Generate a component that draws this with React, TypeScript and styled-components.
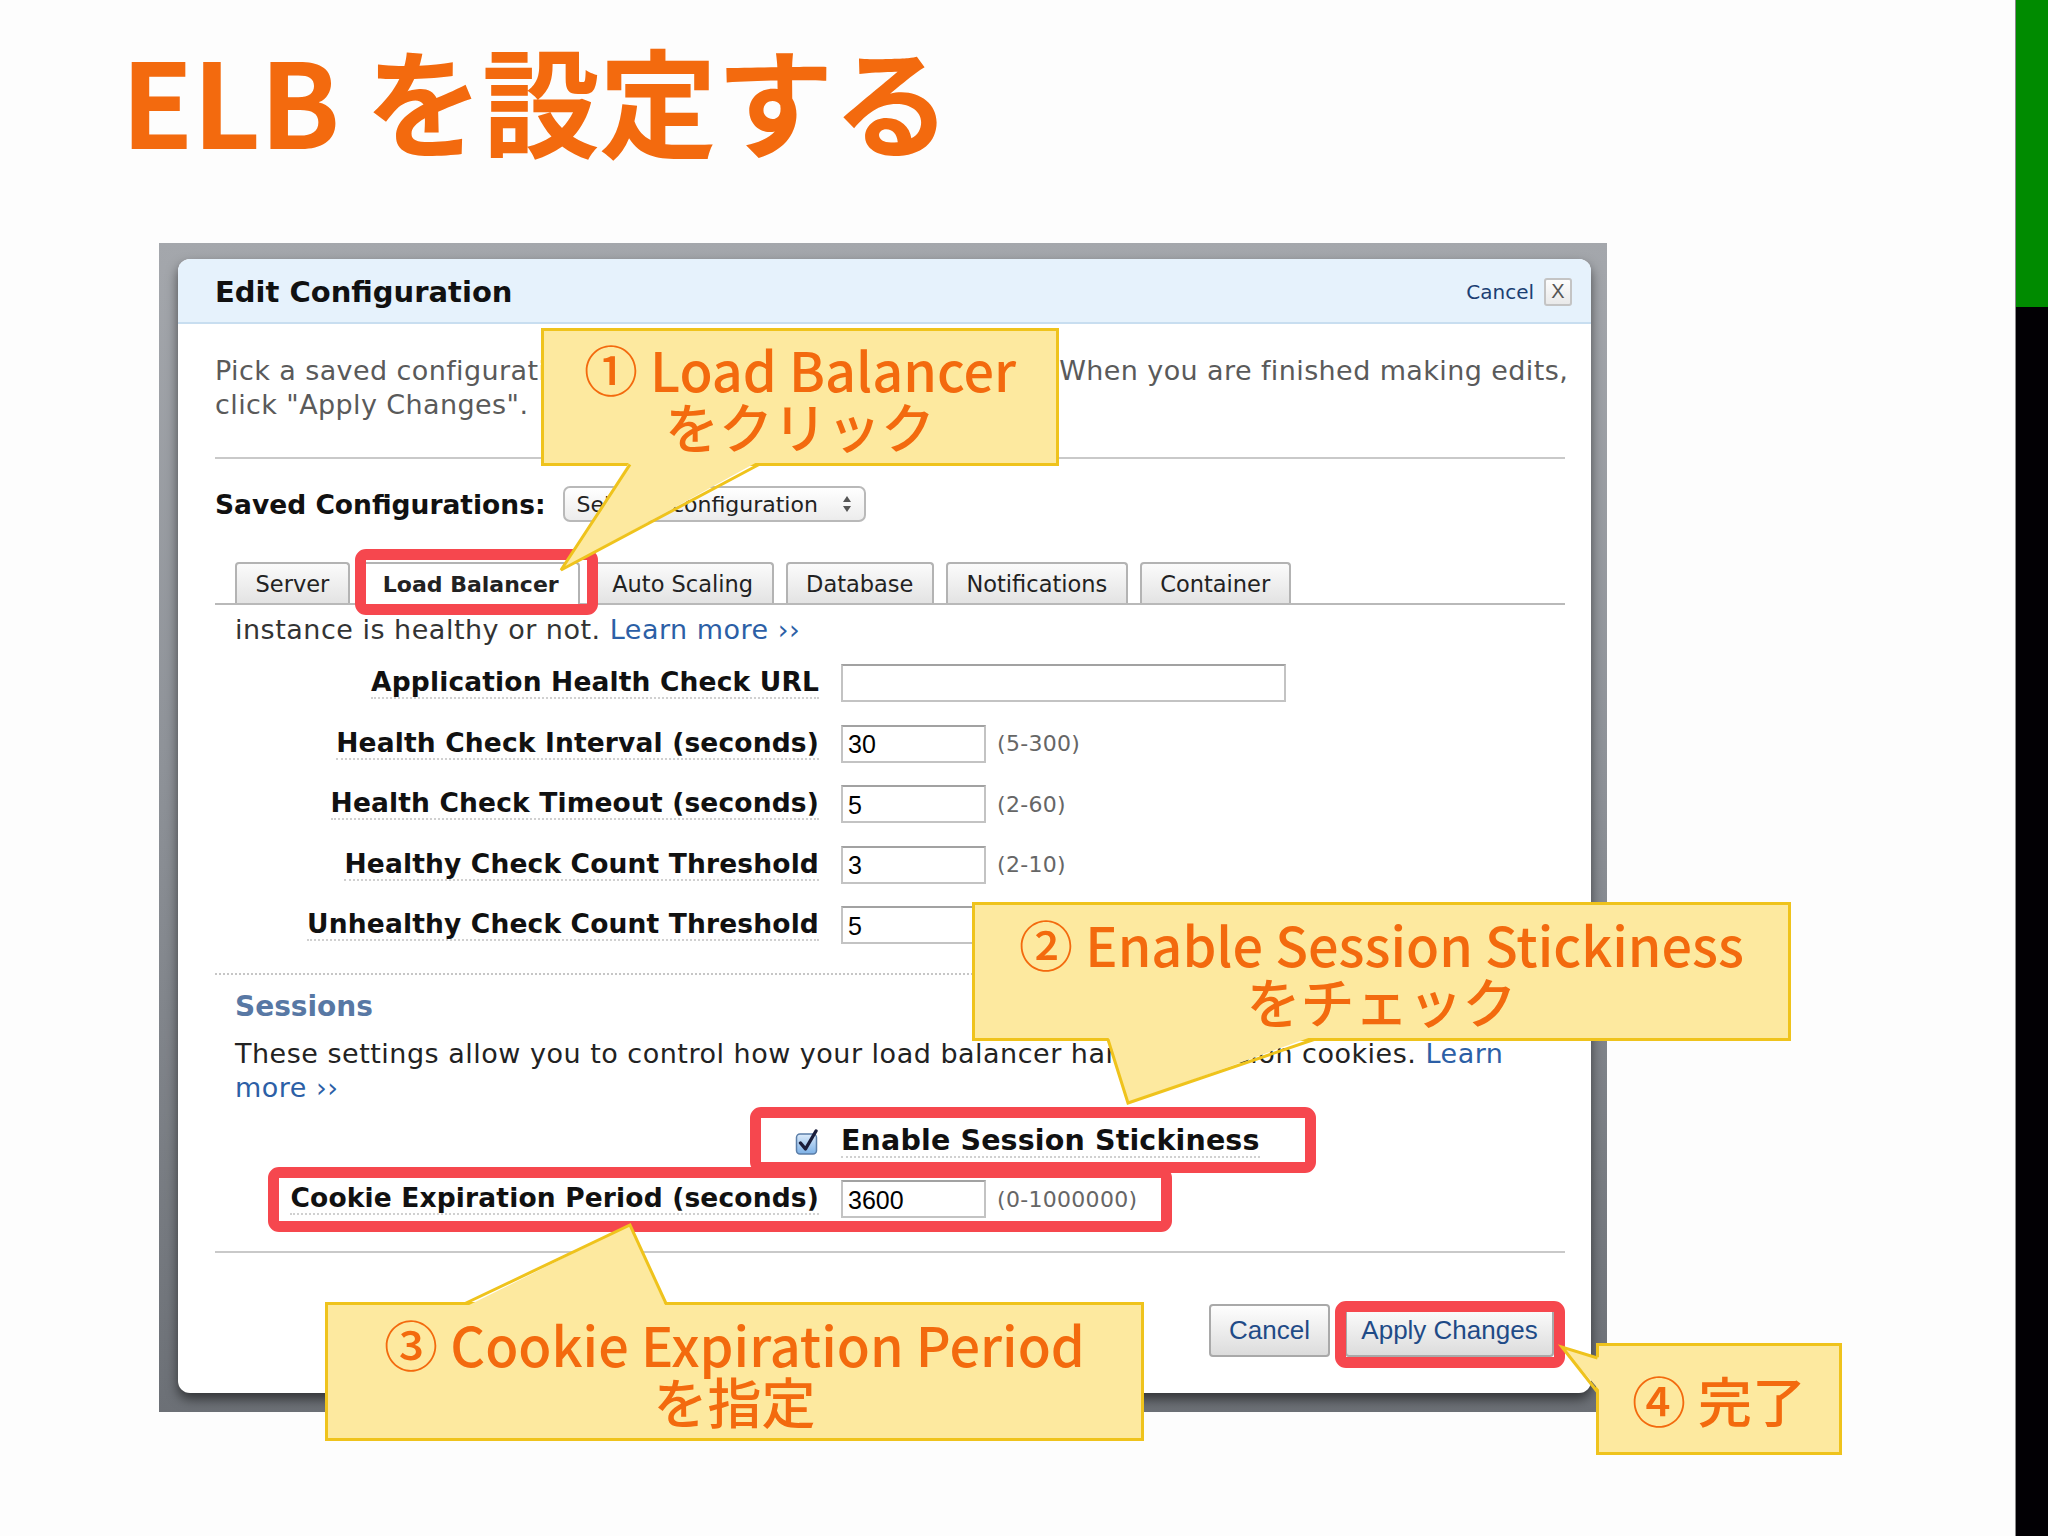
import React from 'react'
import styled, { createGlobalStyle } from 'styled-components'

const ui = `"DejaVu Sans", Verdana, sans-serif`
const mac = `"Liberation Sans", Arial, sans-serif`
const jp = `"Noto Sans CJK JP", "Noto Sans", sans-serif`
const orange = '#f36a0e'
const red = '#f6474e'

const GlobalStyle = createGlobalStyle`
  html, body {
    margin: 0;
    padding: 0;
    background: #fdfdfd;
  }
  body {
    width: 2048px;
    height: 1536px;
    overflow: hidden;
  }
`

const Slide = styled.div`
  position: relative;
  width: 2048px;
  height: 1536px;
  display: grid;
  grid-template-columns: 1fr 33px;
  background: #fdfdfd;
  overflow: hidden;
`

const Main = styled.main`
  display: flex;
  flex-direction: column;
  align-items: flex-start;
`

const Title = styled.h1`
  margin: 38px 0 0 121px;
  font-family: ${jp};
  font-weight: 700;
  font-size: 118px;
  line-height: 120px;
  letter-spacing: -1px;
  color: ${orange};
`

const SideBar = styled.aside`
  display: grid;
  grid-template-rows: 307px 1fr;
  border-left: 1px solid #8a8a8a;
`

const SideTop = styled.div`
  background: #008b00;
`

const SideBottom = styled.div`
  background: #020004;
`

const ScreenFrame = styled.div`
  margin: 85px 0 0 159px;
  width: 1448px;
  box-sizing: border-box;
  padding: 16px 16px 19px 19px;
  background: linear-gradient(180deg, #a4a7ac 0%, #8e9298 45%, #6c7076 100%);
`

const Modal = styled.section`
  background: #fff;
  border-radius: 12px;
  overflow: hidden;
  box-shadow: 0 6px 12px rgba(0, 0, 0, 0.55);
  font-family: ${ui};
  color: #222;
`

const ModalHeader = styled.header`
  height: 65px;
  box-sizing: border-box;
  border-bottom: 2px solid #c8def0;
  background: #e6f2fc;
  display: flex;
  align-items: center;
  justify-content: space-between;
  padding: 2px 19px 0 37px;
`

const HeaderTitle = styled.h2`
  margin: 0;
  font-size: 29px;
  font-weight: 700;
  color: #111;
`

const HeaderActions = styled.div`
  display: flex;
  align-items: center;
  gap: 10px;
`

const HeaderCancel = styled.a`
  font-size: 20px;
  color: #1b3f73;
  text-decoration: none;
`

const CloseBox = styled.span`
  width: 28px;
  height: 28px;
  box-sizing: border-box;
  display: flex;
  align-items: center;
  justify-content: center;
  border: 2px solid #c4c4c4;
  border-radius: 3px;
  background: linear-gradient(#fdfdfd, #e9e9e9);
  font-family: ${mac};
  font-size: 20px;
  color: #555;
`

const ModalBody = styled.div`
  padding: 0 26px 36px 37px;
  display: flex;
  flex-direction: column;
`

const Intro = styled.p`
  margin: 30px 0 0;
  font-size: 27px;
  line-height: 34px;
  letter-spacing: 0.4px;
  color: #5a5a5a;
  white-space: nowrap;
`

const Rule = styled.div<{ $gap: number }>`
  margin-top: ${p => p.$gap}px;
  height: 2px;
  background: #c9c9c9;
`

const DottedRule = styled.div`
  margin-top: 29px;
  border-top: 2px dotted #c6c6c6;
`

const SavedRow = styled.div`
  margin-top: 27px;
  height: 36px;
  display: flex;
  align-items: center;
  gap: 17px;
`

const StrongLabel = styled.span`
  font-size: 26.5px;
  font-weight: 700;
  color: #111;
`

const SelectBox = styled.div`
  width: 303px;
  height: 36px;
  box-sizing: border-box;
  display: flex;
  align-items: center;
  justify-content: space-between;
  padding: 0 12px 0 12px;
  border: 2px solid #b9b9b9;
  border-radius: 7px;
  background: linear-gradient(#ffffff, #ececec);
  font-size: 22px;
  color: #222;
`

const TabBar = styled.nav`
  margin-top: 40px;
  display: flex;
  align-items: flex-end;
  gap: 12px;
  padding-left: 20px;
  border-bottom: 2px solid #b9b9b9;
`

const Tab = styled.span<{ $active?: boolean }>`
  height: ${p => (p.$active ? 43 : 41)}px;
  margin-bottom: ${p => (p.$active ? -2 : 0)}px;
  box-sizing: border-box;
  display: flex;
  align-items: center;
  padding: 0 ${p => (p.$active ? 19 : 18.5)}px;
  border: 2px solid #b3b3b3;
  border-bottom: none;
  border-radius: 4px 4px 0 0;
  background: ${p => (p.$active ? '#fff' : 'linear-gradient(#fbfbfb, #e3e3e3)')};
  font-size: ${p => (p.$active ? 22 : 22.5)}px;
  font-weight: ${p => (p.$active ? 700 : 400)};
  color: #222;
`

const Panel = styled.div`
  padding-left: 20px;
  display: flex;
  flex-direction: column;
`

const InfoLine = styled.p`
  margin: 8px 0 0;
  font-size: 27px;
  line-height: 34px;
  letter-spacing: 0.5px;
  color: #333;
  white-space: nowrap;
`

const Link = styled.a`
  color: #2c5fa6;
  text-decoration: none;
`

const FormGrid = styled.div<{ $top: number; $rowGap: number }>`
  margin-top: ${p => p.$top}px;
  display: grid;
  grid-template-columns: 584px 1fr;
  column-gap: 22px;
  row-gap: ${p => p.$rowGap}px;
  align-items: center;
`

const FieldLabel = styled.label<{ $size?: number }>`
  justify-self: end;
  font-size: ${p => p.$size ?? 26.5}px;
  font-weight: 700;
  line-height: 30px;
  letter-spacing: 0.15px;
  color: #111;
  border-bottom: 2px dotted #d0d0d0;
  white-space: nowrap;
`

const FieldCell = styled.div`
  height: 38px;
  display: flex;
  align-items: center;
  gap: 11px;
`

const TextInput = styled.input<{ $wide?: boolean }>`
  width: ${p => (p.$wide ? 445 : 145)}px;
  height: 38px;
  box-sizing: border-box;
  margin: 0;
  padding: 2px 5px 0;
  border: 2px solid #c3c3c3;
  border-top-color: #a2a2a2;
  background: #fff;
  font-family: ${mac};
  font-size: 25px;
  color: #000;
  outline: none;
`

const Hint = styled.span`
  font-size: 22px;
  letter-spacing: 0.3px;
  color: #666;
`

const CheckCell = styled.div`
  justify-self: end;
  display: flex;
  align-items: center;
`

const SectionTitle = styled.h3`
  margin: 15px 0 0;
  padding-left: 20px;
  font-size: 28px;
  font-weight: 700;
  line-height: 34px;
  color: #5878a4;
`

const SectionText = styled.p`
  margin: 13px 0 0;
  padding-left: 20px;
  font-size: 27px;
  line-height: 34px;
  letter-spacing: 0.5px;
  color: #222;
  white-space: nowrap;
`

const SessionRows = styled(FormGrid)`
  padding-left: 20px;
`

const ButtonRow = styled.div`
  margin-top: 51px;
  display: flex;
  justify-content: flex-end;
  gap: 15px;
  padding-right: 11px;
`

const Button = styled.button<{ $w: number }>`
  width: ${p => p.$w}px;
  height: 53px;
  box-sizing: border-box;
  border: 2px solid #a9a9a9;
  border-radius: 4px;
  background: linear-gradient(#fefefe, #dcdcdc);
  font-family: ${mac};
  font-size: 26px;
  color: #1f4b87;
  padding: 0;
`

const Highlight = styled.div<{ $x: number; $y: number; $w: number; $h: number }>`
  position: absolute;
  left: ${p => p.$x}px;
  top: ${p => p.$y}px;
  width: ${p => p.$w}px;
  height: ${p => p.$h}px;
  box-sizing: border-box;
  border: 11px solid ${red};
  border-radius: 11px;
  pointer-events: none;
`

const CalloutBox = styled.div<{ $x: number; $y: number; $w: number; $h: number }>`
  position: absolute;
  left: ${p => p.$x}px;
  top: ${p => p.$y}px;
  width: ${p => p.$w}px;
  height: ${p => p.$h}px;
  box-sizing: border-box;
  border: 3px solid #efc31c;
  background: #fde99f;
  display: flex;
  flex-direction: column;
  align-items: center;
  justify-content: center;
  font-family: ${jp};
  font-weight: 500;
  font-size: 54px;
  line-height: 57px;
  color: ${orange};
  white-space: nowrap;
`

const TailLayer = styled.svg`
  position: absolute;
  left: 0;
  top: 0;
  width: 2048px;
  height: 1536px;
  pointer-events: none;
`

type Pt = [number, number]

function Callout(props: {
  x: number
  y: number
  w: number
  h: number
  fill: Pt[]
  edge: Pt[]
  lines: string[]
}) {
  const pts = (a: Pt[]) => a.map(p => p.join(',')).join(' ')
  return (
    <>
      <CalloutBox $x={props.x} $y={props.y} $w={props.w} $h={props.h}>
        {props.lines.map(l => (
          <span key={l}>{l}</span>
        ))}
      </CalloutBox>
      <TailLayer viewBox="0 0 2048 1536">
        <polygon points={pts(props.fill)} fill="#fde99f" />
        <polyline points={pts(props.edge)} fill="none" stroke="#efc31c" strokeWidth="3" strokeLinejoin="miter" />
      </TailLayer>
    </>
  )
}

function UpDown() {
  return (
    <svg width="10" height="18" viewBox="0 0 10 18">
      <path d="M5 1 L9 7 L1 7 Z" fill="#555" />
      <path d="M5 17 L9 11 L1 11 Z" fill="#555" />
    </svg>
  )
}

function CheckMark() {
  return (
    <svg width="24" height="26" viewBox="0 0 24 26">
      <defs>
        <linearGradient id="cb" x1="0" y1="0" x2="0" y2="1">
          <stop offset="0" stopColor="#dcebfa" />
          <stop offset="1" stopColor="#7cb0e6" />
        </linearGradient>
      </defs>
      <rect x="1.5" y="5" width="20" height="20" rx="3.5" fill="url(#cb)" stroke="#5b7ea8" strokeWidth="1.5" />
      <path d="M5.5 14 L10.5 20 L21 2" fill="none" stroke="#1b1d3a" strokeWidth="3.4" strokeLinecap="round" strokeLinejoin="round" />
    </svg>
  )
}

const fields = [
  { label: 'Application Health Check URL', value: '', wide: true, hint: '' },
  { label: 'Health Check Interval (seconds)', value: '30', hint: '(5-300)' },
  { label: 'Health Check Timeout (seconds)', value: '5', hint: '(2-60)' },
  { label: 'Healthy Check Count Threshold', value: '3', hint: '(2-10)' },
  { label: 'Unhealthy Check Count Threshold', value: '5', hint: '(2-10)' },
]

const tabs = ['Server', 'Load Balancer', 'Auto Scaling', 'Database', 'Notifications', 'Container']

export default function App() {
  return (
    <Slide>
      <GlobalStyle />
      <Main>
        <Title>ELB を設定する</Title>
        <ScreenFrame>
          <Modal>
            <ModalHeader>
              <HeaderTitle>Edit Configuration</HeaderTitle>
              <HeaderActions>
                <HeaderCancel href="#">Cancel</HeaderCancel>
                <CloseBox>X</CloseBox>
              </HeaderActions>
            </ModalHeader>
            <ModalBody>
              <Intro>
                Pick a saved configuration or edit the settings shown below. When you are finished making edits,
                <br />
                click "Apply Changes".
              </Intro>
              <Rule $gap={35} />
              <SavedRow>
                <StrongLabel>Saved Configurations:</StrongLabel>
                <SelectBox>
                  <span>Select a configuration</span>
                  <UpDown />
                </SelectBox>
              </SavedRow>
              <TabBar>
                {tabs.map(t => (
                  <Tab key={t} $active={t === 'Load Balancer'}>
                    {t}
                  </Tab>
                ))}
              </TabBar>
              <Panel>
                <InfoLine>
                  instance is healthy or not. <Link href="#">Learn more ››</Link>
                </InfoLine>
                <FormGrid $top={17} $rowGap={22.5}>
                  {fields.map(f => (
                    <React.Fragment key={f.label}>
                      <FieldLabel>{f.label}</FieldLabel>
                      <FieldCell>
                        <TextInput $wide={f.wide} value={f.value} readOnly />
                        {f.hint && <Hint>{f.hint}</Hint>}
                      </FieldCell>
                    </React.Fragment>
                  ))}
                </FormGrid>
              </Panel>
              <DottedRule />
              <SectionTitle>Sessions</SectionTitle>
              <SectionText>
                These settings allow you to control how your load balancer handles session cookies.{' '}
                <Link href="#">Learn</Link>
                <br />
                <Link href="#">more ››</Link>
              </SectionText>
              <SessionRows $top={18} $rowGap={19}>
                <CheckCell>
                  <CheckMark />
                </CheckCell>
                <FieldCell>
                  <FieldLabel $size={28.5}>Enable Session Stickiness</FieldLabel>
                </FieldCell>
                <FieldLabel>Cookie Expiration Period (seconds)</FieldLabel>
                <FieldCell>
                  <TextInput value="3600" readOnly />
                  <Hint>(0-1000000)</Hint>
                </FieldCell>
              </SessionRows>
              <Rule $gap={33} />
              <ButtonRow>
                <Button $w={121}>Cancel</Button>
                <Button $w={209}>Apply Changes</Button>
              </ButtonRow>
            </ModalBody>
          </Modal>
        </ScreenFrame>
      </Main>
      <SideBar>
        <SideTop />
        <SideBottom />
      </SideBar>

      <Highlight $x={355} $y={549} $w={243} $h={66} />
      <Highlight $x={750} $y={1107} $w={566} $h={66} />
      <Highlight $x={268} $y={1167} $w={904} $h={65} />
      <Highlight $x={1335} $y={1301} $w={230} $h={67} />

      <Callout
        x={541}
        y={328}
        w={518}
        h={138}
        fill={[[630, 461], [561, 570], [759, 461]]}
        edge={[[630, 464.5], [561, 570], [759, 464.5]]}
        lines={['① Load Balancer', 'をクリック']}
      />
      <Callout
        x={972}
        y={902}
        w={819}
        h={139}
        fill={[[1108, 1036], [1128, 1103], [1314, 1036]]}
        edge={[[1108, 1039.5], [1128, 1103], [1314, 1039.5]]}
        lines={['② Enable Session Stickiness', 'をチェック']}
      />
      <Callout
        x={325}
        y={1302}
        w={819}
        h={139}
        fill={[[465, 1307], [630, 1225], [666, 1307]]}
        edge={[[465, 1303.5], [630, 1225], [666, 1303.5]]}
        lines={['③ Cookie Expiration Period', 'を指定']}
      />
      <Callout
        x={1596}
        y={1343}
        w={246}
        h={112}
        fill={[[1601, 1358], [1562, 1347], [1601, 1392]]}
        edge={[[1597.5, 1358], [1562, 1347], [1597.5, 1392]]}
        lines={['④ 完了']}
      />
    </Slide>
  )
}
